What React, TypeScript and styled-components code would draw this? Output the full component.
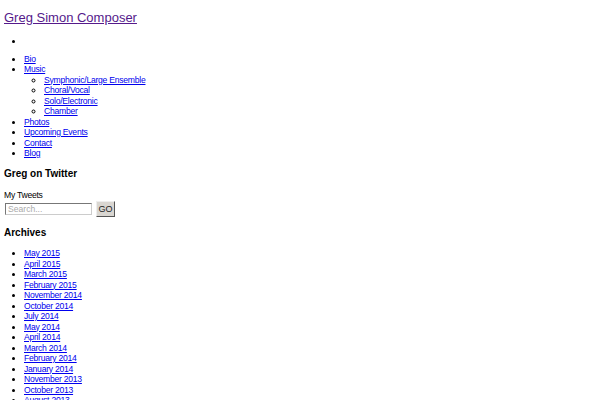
import styled, { createGlobalStyle } from "styled-components";

const GlobalStyle = createGlobalStyle`
  body {
    margin: 0;
    padding: 0 4px;
    background: #fff;
    color: #000;
    font-family: "Liberation Sans", Arial, sans-serif;
    font-size: 8.6px;
    letter-spacing: -0.25px;
    line-height: 10.5px;
  }
  a { color: #0000ee; }
  a:visited { color: #551a8b; }
`;

const SiteTitle = styled.h1`
  margin: 0;
  padding-top: 10px;
  font-size: 13px;
  letter-spacing: 0;
  line-height: 16px;
  font-weight: normal;
  a { color: #551a8b; }
`;

const List = styled.ul<{ $top?: number }>`
  margin: ${(p) => p.$top ?? 7}px 0 0;
  padding-left: 20px;
  list-style: disc;
`;

const SubList = styled.ul`
  margin: 0;
  padding-left: 20px;
  list-style-type: circle;
`;

const Item = styled.li`
  min-height: 10.5px;
`;

const WidgetTitle = styled.h3<{ $top?: number }>`
  margin: ${(p) => p.$top ?? 8}px 0 0;
  font-size: 10px;
  letter-spacing: 0;
  line-height: 14px;
  font-weight: bold;
`;

const Tweets = styled.p`
  margin: 9px 0 0;
`;

const SearchForm = styled.form`
  display: flex;
  align-items: center;
  gap: 4px;
  margin-top: 1px;
`;

const SearchInput = styled.input`
  width: 87px;
  height: 12px;
  margin: 0 0 0 1px;
  padding: 0 2px;
  border: 1px solid #777;
  border-right-color: #ccc;
  border-bottom-color: #ccc;
  font-family: "Liberation Sans", Arial, sans-serif;
  font-size: 8.6px;
  box-sizing: border-box;
  &::placeholder { color: #aaa; }
`;

const GoButton = styled.button`
  width: 19px;
  height: 16px;
  padding: 0;
  border: 1px solid #555;
  border-top-color: #eee;
  border-left-color: #eee;
  background: #d9d6d1;
  font-family: "Liberation Sans", Arial, sans-serif;
  font-size: 9px;
  color: #222;
`;

const music = ["Symphonic/Large Ensemble", "Choral/Vocal", "Solo/Electronic", "Chamber"];
const archives = [
  "May 2015", "April 2015", "March 2015", "February 2015", "November 2014",
  "October 2014", "July 2014", "May 2014", "April 2014", "March 2014",
  "February 2014", "January 2014", "November 2013", "October 2013", "August 2013",
];

const App = () => {
  return (
    <>
      <GlobalStyle />
      <SiteTitle>
        <a href="#">Greg Simon Composer</a>
      </SiteTitle>
      <List $top={10}>
        <Item />
      </List>
      <List>
        <Item><a href="#">Bio</a></Item>
        <Item>
          <a href="#">Music</a>
          <SubList>
            {music.map((m) => (
              <Item key={m}><a href="#">{m}</a></Item>
            ))}
          </SubList>
        </Item>
        <Item><a href="#">Photos</a></Item>
        <Item><a href="#">Upcoming Events</a></Item>
        <Item><a href="#">Contact</a></Item>
        <Item><a href="#">Blog</a></Item>
      </List>
      <WidgetTitle>Greg on Twitter</WidgetTitle>
      <Tweets>My Tweets</Tweets>
      <SearchForm onSubmit={(e) => e.preventDefault()}>
        <SearchInput placeholder="Search..." />
        <GoButton type="submit">GO</GoButton>
      </SearchForm>
      <WidgetTitle $top={9}>Archives</WidgetTitle>
      <List $top={8}>
        {archives.map((a) => (
          <Item key={a}><a href="#">{a}</a></Item>
        ))}
      </List>
    </>
  );
};

export default App;
